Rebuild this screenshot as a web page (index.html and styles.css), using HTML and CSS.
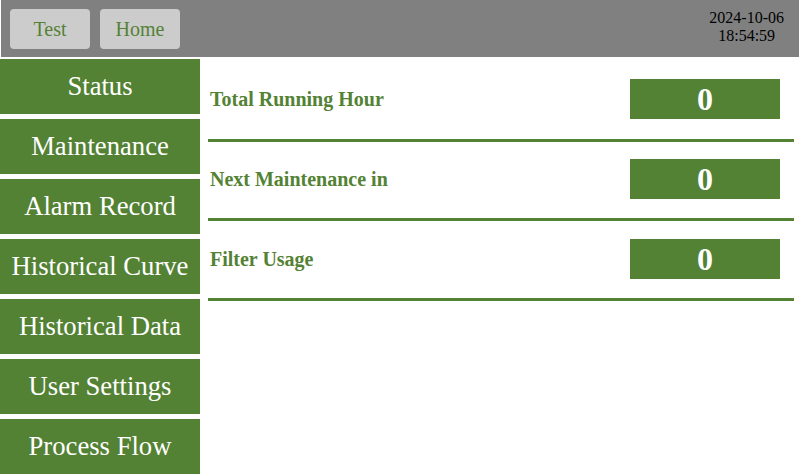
FILE: index.html
```html
<!DOCTYPE html>
<html>
<head>
<meta charset="utf-8">
<link rel="stylesheet" href="styles.css">
</head>
<body>
<header class="topbar">
  <button class="top-btn">Test</button>
  <button class="top-btn">Home</button>
  <div class="clock">
    <div>2024-10-06</div>
    <div>18:54:59</div>
  </div>
</header>
<div class="main">
  <nav class="sidebar">
    <div class="nav-item">Status</div>
    <div class="nav-item">Maintenance</div>
    <div class="nav-item">Alarm Record</div>
    <div class="nav-item">Historical Curve</div>
    <div class="nav-item">Historical Data</div>
    <div class="nav-item">User Settings</div>
    <div class="nav-item">Process Flow</div>
  </nav>
  <section class="content">
    <div class="row row-first">
      <div class="label">Total Running Hour</div>
      <div class="value">0</div>
    </div>
    <div class="rule"></div>
    <div class="row">
      <div class="label">Next Maintenance in</div>
      <div class="value">0</div>
    </div>
    <div class="rule"></div>
    <div class="row row-last">
      <div class="label">Filter Usage</div>
      <div class="value">0</div>
    </div>
    <div class="rule"></div>
  </section>
</div>
</body>
</html>
```

FILE: styles.css
```css
html, body {
  margin: 0;
  padding: 0;
  background: #ffffff;
  font-family: "Liberation Serif", "Times New Roman", serif;
}

.topbar {
  margin-left: 1px;
  height: 57px;
  box-sizing: border-box;
  background: #808080;
  display: flex;
  align-items: flex-start;
  gap: 10px;
  padding: 9px 0 0 9px;
}

.top-btn {
  width: 80px;
  height: 40px;
  border: none;
  border-radius: 4px;
  background: #cccccc;
  color: #548235;
  font-family: "Liberation Serif", "Times New Roman", serif;
  font-size: 20px;
  padding: 0;
}

.clock {
  margin-left: auto;
  margin-right: 15px;
  text-align: center;
  font-size: 16px;
  line-height: 18px;
  color: #000000;
}

.main {
  display: flex;
  margin-top: 2px;
}

.sidebar {
  width: 200px;
  display: flex;
  flex-direction: column;
  gap: 5px;
}

.nav-item {
  height: 55px;
  background: #548235;
  color: #ffffff;
  font-size: 26.67px;
  display: flex;
  align-items: center;
  justify-content: center;
  padding-bottom: 1px;
  box-sizing: border-box;
}

.content {
  flex: 1;
  padding: 0 5px 0 8px;
}

.row {
  display: flex;
  align-items: center;
  padding: 17px 0 19px;
}

.row-first {
  padding-top: 20px;
  padding-bottom: 20px;
}

.row-last {
  padding-top: 18px;
}

.label {
  flex: 1;
  padding-left: 2px;
  color: #548235;
  font-weight: bold;
  font-size: 20px;
}

.value {
  width: 150px;
  height: 40px;
  margin-right: 14px;
  background: #548235;
  color: #ffffff;
  font-weight: bold;
  font-size: 32px;
  display: flex;
  align-items: center;
  justify-content: center;
}

.rule {
  height: 3px;
  background: #548235;
}
```
